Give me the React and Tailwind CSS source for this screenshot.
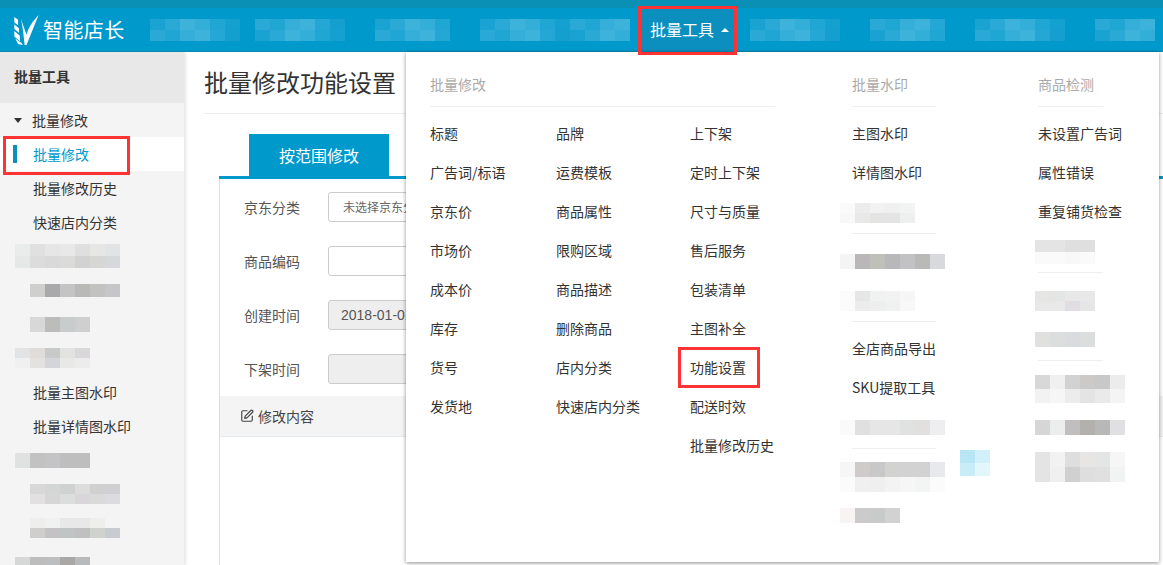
import React from 'react';
import { SquarePen } from 'lucide-react';

// mosaic patch standing in for the text that is pixelated in the screenshot
const Blur = ({ rows, cellW = 15, cellH = 10, className = '' }) => (
  <div className={`flex flex-col ${className}`}>
    {rows.map((row, i) => (
      <div key={i} className="flex">
        {row.map((c, j) => (
          <div key={j} style={{ width: cellW, height: cellH, background: c }} />
        ))}
      </div>
    ))}
  </div>
);

const Logo = () => (
  <svg width="27" height="30" viewBox="0 0 26 32" className="shrink-0">
    <path d="M0 2 L4 5 L4 11 L0 8 Z M0 10 L5 14 L5 19 L0 15 Z M0 17 L6 22 L6 28 L0 23 Z M1 25 L8 30 L9 32 L4 31 Z" fill="#fff" />
    <path d="M7 4 L13 21 C15 13 20 6 26 0 C22 9 18 20 13 32 L11 32 C10 22 9 12 7 4 Z" fill="#fff" />
  </svg>
);

const NavPatch = ({ top, bottom, className = '' }) => (
  <Blur rows={[top, bottom]} cellH={11} className={className} />
);

const navA = ['#1aa3d2', '#2aa9d6', '#3db2da', '#33aed8', '#1fa6d3', '#14a1d0'];
const navB = ['#2aa9d6', '#1fa6d3', '#35afd9', '#3db2da', '#24a7d4', '#149fce'];

const sideRows = [
  { blur: [['#eaecec', '#e0e0e0', '#e6e6e6', '#e8e8e8', '#dfdfdf', '#e6e6e4', '#e2e3e5'], ['#e6e8e8', '#dcdcdc', '#d9d9d9', '#dbdbd9', '#d2d2d2', '#d6d6d4', '#d6d8dc']], h: 12, ml: 'ml-[15px]' },
  { blur: [['#cfcfcd', '#a9a9ab', '#c4c4c4', '#b9b9b7', '#c2c2c0', '#c6c6c8']], h: 13, ml: 'ml-[30px]' },
  { blur: [['#d8d8d8', '#bcbcba', '#c9cccc', '#cfcfcf']], h: 15, ml: 'ml-[30px]' },
  { blur: [['#e2e3e5', '#dfdcda', '#c8caca', '#e2e2e0', '#d9d7da'], ['#f0f0f0', '#e4e2e0', '#d4d5d8', '#e8e8e6', '#ececec']], h: 10, ml: 'ml-[15px]' },
  { text: '批量主图水印' },
  { text: '批量详情图水印' },
  { blur: [['#e0e2e2', '#c2c2c2', '#c4c4c6', '#bebebe', '#bebebe']], h: 15, ml: 'ml-[15px]' },
  { blur: [['#d9d8d8', '#d4d6d6', '#d0d2d2', '#dcdcda', '#d0d0d0', '#d0d0d2'], ['#e2e0e0', '#d6d6d6', '#dcdede', '#d8d6d8', '#dadada', '#dcdcde']], h: 10, ml: 'ml-[30px]' },
  { blur: [['#eeeeec', '#f0f2f2', '#e8e8e8', '#e8e8e8', '#eeeeec', '#f4f4f4'], ['#cfcecc', '#c4c2c4', '#c0c4c4', '#c0c0c0', '#d0d2ce', '#c8ccd0']], h: 10, ml: 'ml-[30px]' },
  { blur: [['#d6d8d8', '#bdbdbd', '#bcbec0', '#a9a8a6', '#b8babc']], h: 10, ml: 'ml-[15px]' },
];

const col1 = ['标题', '广告词/标语', '京东价', '市场价', '成本价', '库存', '货号', '发货地'];
const col2 = ['品牌', '运费模板', '商品属性', '限购区域', '商品描述', '删除商品', '店内分类', '快速店内分类'];
const col3 = ['上下架', '定时上下架', '尺寸与质量', '售后服务', '包装清单', '主图补全', '功能设置', '配送时效', '批量修改历史'];

const Item = ({ children }) => (
  <div className="h-[39px] pb-[4px] flex items-center whitespace-nowrap">{children}</div>
);

const BlurItem = ({ rows, cellH = 10, className = '-ml-[12px]' }) => (
  <div className="h-[39px] flex items-center">
    <Blur rows={rows} cellH={cellH} className={className} />
  </div>
);

const MenuHead = ({ children, className = '' }) => (
  <div className={`h-[55px] pt-[22px] leading-[21px] text-[#aaaaaa] border-b border-[#eeeeee] ${className}`}>{children}</div>
);

const Divider = () => <div className="mt-[1px] mb-[8px] border-b border-[#eeeeee]" />;

const Field = ({ label, className = '', children }) => (
  <div className={`flex items-center h-[30px] ${className}`}>
    <span className="w-[108px] pl-[24px] text-sm text-[#555555] shrink-0">{label}</span>
    {children}
  </div>
);

export default function App() {
  return (
    <div
      className="relative h-screen w-screen overflow-hidden flex flex-col bg-white text-sm text-[#333333]"
      style={{ fontFamily: '"Noto Sans CJK SC", "Liberation Sans", sans-serif' }}
    >
      {/* top bar */}
      <div className="h-[52px] shrink-0 bg-[#0099cc] border-t-[8px] border-t-[#0a8fb5] border-b border-b-[#0a8ab0] flex items-center text-white">
        <div className="ml-[13px] flex items-center gap-[3px] w-[137px]">
          <Logo />
          <span className="text-[20px] leading-none tracking-[0.4px]">智能店长</span>
        </div>
        <NavPatch top={navA} bottom={navB} />
        <NavPatch top={navB} bottom={navA} className="ml-[15px]" />
        <NavPatch top={navA.slice(0, 5)} bottom={navB.slice(0, 5)} className="ml-[30px]" />
        <NavPatch top={[...navA, ...navB.slice(0, 4)]} bottom={[...navB, ...navA.slice(0, 4)]} className="ml-[30px]" />
        <div className="ml-[10px] w-[94px] h-full bg-[#0a8fbf] flex items-center pl-[10px] pb-[2px] gap-[7px] text-base">
          批量工具
          <span className="mt-[3px] border-x-[4px] border-x-transparent border-b-[4px] border-b-white" />
        </div>
        <NavPatch top={navA} bottom={navB} className="ml-[16px]" />
        <NavPatch top={navB.slice(0, 5)} bottom={navA.slice(0, 5)} className="ml-[30px]" />
        <NavPatch top={navA} bottom={navB} className="ml-[30px]" />
        <NavPatch top={navB.slice(0, 4)} bottom={navA.slice(0, 4)} className="ml-[30px]" />
      </div>

      <div className="flex flex-1 overflow-hidden">
        {/* sidebar */}
        <div className="w-[184px] shrink-0 bg-[#f4f4f4] shadow-[1px_0_4px_rgba(0,0,0,0.15)]">
          <div className="h-[51px] bg-[#e8e8e8] flex items-center pl-[14px] pb-[4px] font-bold">批量工具</div>
          <div className="h-[34px] flex items-center pl-[14px]">
            <span className="border-x-[4.5px] border-x-transparent border-t-[5px] border-t-[#333333]" />
            <span className="ml-[9px] pl-[1px]">批量修改</span>
          </div>
          <div className="relative h-[34px] bg-white flex items-center pl-[33px] text-[#0099cc]">
            <span className="absolute left-[13px] top-[8px] w-[4px] h-[18px] bg-[#0a8fbf]" />
            批量修改
          </div>
          <div className="h-[34px] flex items-center pl-[33px]">批量修改历史</div>
          <div className="h-[34px] flex items-center pl-[33px]">快速店内分类</div>
          {sideRows.map((r, i) => (
            <div key={i} className={`h-[34px] flex items-center ${r.text ? 'pl-[33px]' : ''}`}>
              {r.text || <Blur rows={r.blur} cellH={r.h} className={r.ml} />}
            </div>
          ))}
        </div>

        {/* main content */}
        <div className="flex-1 min-w-0 pl-[20px]">
          <div className="h-[62px] flex items-end pb-[19px] border-b border-[#eeeeee] text-2xl leading-none text-[#333333]">
            批量修改功能设置
          </div>
          <div className="ml-[15px] mt-[20px]">
            <div className="h-[45px] border-b-[3px] border-[#0099cc] pl-[30px]">
              <div className="w-[140px] h-[42px] bg-[#0099cc] text-white text-base flex items-center justify-center">按范围修改</div>
            </div>
            <div className="border-l border-[#dddddd] h-[420px]">
              <div className="pt-[13px] flex flex-col gap-[24px]">
                <Field label="京东分类">
                  <div className="w-[300px] h-[30px] border border-[#cccccc] rounded-[3px] flex items-center pl-[14px] text-xs text-[#666666]">未选择京东分类</div>
                </Field>
                <Field label="商品编码">
                  <div className="w-[300px] h-[30px] border border-[#cccccc] rounded-[3px]" />
                </Field>
                <Field label="创建时间">
                  <div className="w-[300px] h-[30px] border border-[#cccccc] rounded-[3px] bg-[#eeeeee] flex items-center pl-[12px] text-[#555555]" style={{ fontFamily: '"Liberation Sans", sans-serif' }}>2018-01-01</div>
                </Field>
                <Field label="下架时间">
                  <div className="w-[300px] h-[30px] border border-[#cccccc] rounded-[3px] bg-[#eeeeee]" />
                </Field>
              </div>
              <div className="mt-[12px] h-[41px] bg-[#f4f4f4] border-b border-[#e6ebf0] flex items-center pl-[20px] gap-[4px] text-[#444444]">
                <SquarePen size={14} strokeWidth={2} />
                修改内容
              </div>
            </div>
          </div>
        </div>
      </div>

      {/* open dropdown menu */}
      <div className="absolute left-[406px] top-[52px] w-[753px] h-[510px] bg-white shadow-[0_1px_4px_rgba(0,0,0,0.45)] flex">
        <div className="ml-[24px] w-[345px] shrink-0">
          <MenuHead>批量修改</MenuHead>
          <div className="mt-[8px] flex">
            <div className="w-[126px]">{col1.map((t) => <Item key={t}>{t}</Item>)}</div>
            <div className="w-[134px]">{col2.map((t) => <Item key={t}>{t}</Item>)}</div>
            <div>{col3.map((t) => <Item key={t}>{t}</Item>)}</div>
          </div>
        </div>

        <div className="ml-[77px] w-[84px] shrink-0">
          <MenuHead>批量水印</MenuHead>
          <div className="mt-[8px]">
            <Item>主图水印</Item>
            <Item>详情图水印</Item>
            <BlurItem rows={[['#fafafa', '#ececec', '#f2f2f2', '#f0f0f0', '#f2f3f3'], ['#f8f8f8', '#e8e8e8', '#e4e4e2', '#e4e4e4', '#eeefef']]} />
            <Divider />
            <BlurItem rows={[['#f4f4f4', '#b9b7b7', '#c0c0bb', '#b8b8ba', '#c2c2c4', '#b9b9b7', '#d8d9dd']]} cellH={15} />
            <BlurItem rows={[['#fbfbfb', '#e6e6e6', '#f0f2f2', '#f2f2f2', '#f6f6f6'], ['#fafafa', '#ececec', '#eeeeee', '#f0f2f2', '#f8f8f8']]} />
            <Divider />
            <Item>全店商品导出</Item>
            <Item>SKU提取工具</Item>
            <BlurItem rows={[['#fafafa', '#e0e0e0', '#e6e6e6', '#e6e6e6', '#e0e2e2', '#e2dfdf', '#eeeef0']]} cellH={15} />
            <Divider />
            <BlurItem rows={[['#f6f6f6', '#cfcbcb', '#c8c8c8', '#d2d2d0', '#d2d2d2', '#d2d2d2', '#e8e9ec'], ['#fbfbfb', '#f0f0f0', '#efefef', '#f3f3f3', '#f6f6f6', '#f3f4f4', '#fbfbfb']]} cellH={15} />
            <BlurItem rows={[['#f8f4f4', '#cbcbcb', '#c9cbcb', '#d2d2d2']]} cellH={15} />
          </div>
        </div>

        <div className="ml-[102px] w-[65px] shrink-0">
          <MenuHead>商品检测</MenuHead>
          <div className="mt-[8px]">
            <Item>未设置广告词</Item>
            <Item>属性错误</Item>
            <Item>重复铺货检查</Item>
            <BlurItem className="-ml-[3px]" rows={[['#e4e4e4', '#e4e4e4', '#dfdfdf', '#dfdfdf'], ['#fafafa', '#fafafa', '#f8f8f8', '#fafafa']]} cellH={12} />
            <Divider />
            <BlurItem className="-ml-[3px]" rows={[['#e6e6e4', '#e4e6e6', '#e8e8e8', '#e8e8e8'], ['#e8e8e8', '#e8e8e8', '#e0dee2', '#e6e6e6']]} />
            <BlurItem className="-ml-[3px]" rows={[['#e0e0de', '#dcdede', '#dadbde', '#dcdedd']]} cellH={15} />
            <Divider />
            <BlurItem className="-ml-[3px]" rows={[['#d8d8d8', '#f0f0f0', '#d2d2d2', '#cccac9', '#c8c8c8', '#ececec'], ['#f2f2f2', '#f6f6f6', '#ececec', '#e4e4e4', '#eaeaea', '#f4f4f4']]} cellH={14} />
            <BlurItem className="-ml-[3px]" rows={[['#d6d6d6', '#eceeee', '#c0bebe', '#b2b1ae', '#b8b8b8', '#e0e0e2']]} cellH={15} />
            <BlurItem className="-ml-[3px]" rows={[['#e4e4e4', '#f2f2f2', '#dedede', '#e8e6e4', '#e4e6e6', '#f6f6f6'], ['#e4e4e4', '#f0f0f0', '#d0d0d0', '#dedede', '#e0e0e0', '#f2f4f4']]} cellH={15} />
          </div>
        </div>

        {/* stray blurred bit of colour */}
        <div className="absolute left-[554px] top-[398px] grid grid-cols-2 w-[30px] h-[26px]">
          <div className="bg-[#b8e6f5]" />
          <div className="bg-[#d2f0fa]" />
          <div className="bg-[#c8ecf8]" />
          <div className="bg-[#e2f6fc]" />
        </div>
      </div>

      {/* red annotation boxes */}
      <div className="absolute left-[3px] top-[136px] w-[127px] h-[39px] border-[3px] border-[#ff3333]" />
      <div className="absolute left-[638px] top-[6px] w-[99px] h-[49px] border-[3px] border-[#ff3333]" />
      <div className="absolute left-[678px] top-[347px] w-[82px] h-[41px] border-[3px] border-[#ff3333]" />
    </div>
  );
}
